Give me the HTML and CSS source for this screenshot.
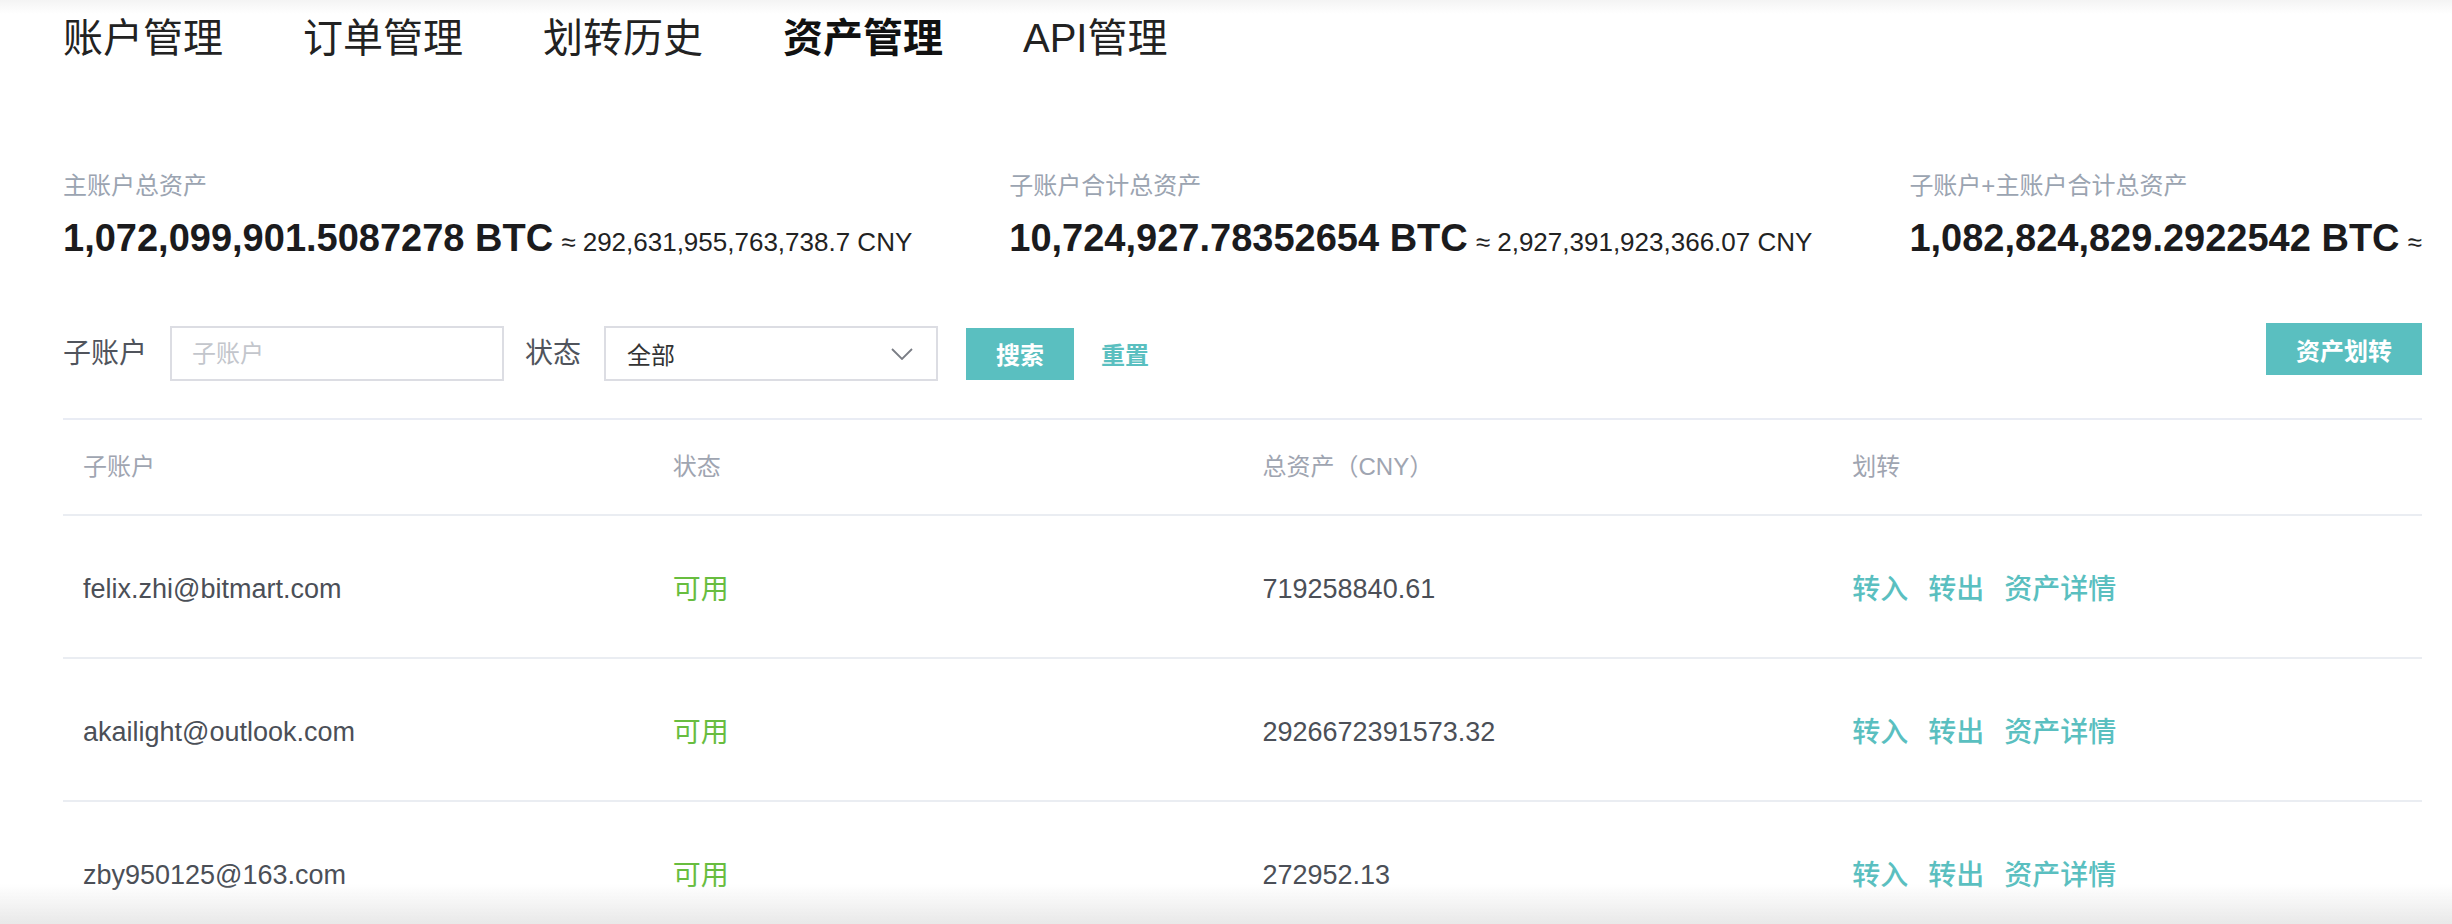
FILE: index.html
```html
<!DOCTYPE html>
<html lang="zh-CN">
<head>
<meta charset="utf-8">
<title>资产管理</title>
<link rel="stylesheet" href="styles.css">
</head>
<body>
<div class="page">
  <nav class="tabs">
    <a class="tab">账户管理</a>
    <a class="tab">订单管理</a>
    <a class="tab">划转历史</a>
    <a class="tab active">资产管理</a>
    <a class="tab">API管理</a>
  </nav>

  <section class="summary">
    <div class="sum-item">
      <div class="sum-label">主账户总资产</div>
      <div class="sum-value"><span class="btc">1,072,099,901.5087278 BTC</span><span class="cny">≈ 292,631,955,763,738.7 CNY</span></div>
    </div>
    <div class="sum-item">
      <div class="sum-label">子账户合计总资产</div>
      <div class="sum-value"><span class="btc">10,724,927.78352654 BTC</span><span class="cny">≈ 2,927,391,923,366.07 CNY</span></div>
    </div>
    <div class="sum-item">
      <div class="sum-label">子账户+主账户合计总资产</div>
      <div class="sum-value"><span class="btc">1,082,824,829.2922542 BTC</span><span class="cny">≈ 2,928,464,022,267.58 CNY</span></div>
    </div>
  </section>

  <form class="filters">
    <label class="f-label">子账户</label>
    <input class="f-input" type="text" placeholder="子账户">
    <label class="f-label f-label-2">状态</label>
    <div class="f-select">
      <span>全部</span>
      <svg class="chev" width="22" height="12" viewBox="0 0 22 12"><path d="M1 1 L11 11 L21 1" fill="none" stroke="#7a7d85" stroke-width="1.8"/></svg>
    </div>
    <button type="button" class="btn btn-search">搜索</button>
    <a class="reset">重置</a>
    <button type="button" class="btn btn-transfer">资产划转</button>
  </form>

  <div class="table">
    <div class="row head">
      <div class="cell">子账户</div>
      <div class="cell">状态</div>
      <div class="cell">总资产（CNY）</div>
      <div class="cell">划转</div>
    </div>
    <div class="row">
      <div class="cell latin">felix.zhi@bitmart.com</div>
      <div class="cell ok">可用</div>
      <div class="cell latin">719258840.61</div>
      <div class="cell actions"><a>转入</a><a>转出</a><a>资产详情</a></div>
    </div>
    <div class="row">
      <div class="cell latin">akailight@outlook.com</div>
      <div class="cell ok">可用</div>
      <div class="cell latin">2926672391573.32</div>
      <div class="cell actions"><a>转入</a><a>转出</a><a>资产详情</a></div>
    </div>
    <div class="row">
      <div class="cell latin">zby950125@163.com</div>
      <div class="cell ok">可用</div>
      <div class="cell latin">272952.13</div>
      <div class="cell actions"><a>转入</a><a>转出</a><a>资产详情</a></div>
    </div>
  </div>
</div>
<div class="bottom-shade"></div>
</body>
</html>
```

FILE: styles.css
```css
html, body {
  margin: 0;
  height: 100%;
  overflow: hidden;
}
body {
  background: #fff linear-gradient(#f4f4f4, #ffffff 14px) no-repeat;
  font-family: "Liberation Sans", "Noto Sans CJK SC", sans-serif;
  color: #222;
}
.page {
  padding: 18px 30px 0 63px;
}
.tabs {
  display: flex;
  gap: 80px;
}
.tab {
  font-size: 40px;
  line-height: 40px;
  color: #222;
  cursor: pointer;
}
.tab.active {
  font-weight: 700;
  color: #111;
}
.summary {
  margin-top: 110px;
  display: flex;
  gap: 97px;
  white-space: nowrap;
  overflow: hidden;
}
.sum-label {
  font-size: 24px;
  line-height: 36px;
  color: #9ba4b1;
}
.sum-value {
  margin-top: 12px;
  line-height: 44px;
  height: 44px;
}
.btc {
  font-size: 38px;
  font-weight: 700;
  color: #1b1b1d;
}
.cny {
  font-size: 26px;
  color: #222;
  margin-left: 8px;
}
.filters {
  margin: 66px 0 0;
  display: flex;
  align-items: center;
  height: 55px;
}
.f-label {
  font-size: 28px;
  line-height: 28px;
  color: #50545c;
  margin-right: 23px;
}
.f-label-2 {
  margin-left: 21px;
}
.f-input {
  box-sizing: border-box;
  width: 334px;
  height: 55px;
  border: 2px solid #dcdde3;
  padding: 0 20px;
  font-size: 24px;
  font-family: inherit;
  outline: none;
  margin: 0;
}
.f-input::placeholder {
  color: #c3c6cc;
}
.f-select {
  box-sizing: border-box;
  width: 334px;
  height: 55px;
  border: 2px solid #dcdde3;
  padding: 0 23px 0 21px;
  display: flex;
  align-items: center;
  justify-content: space-between;
  font-size: 24px;
  color: #333;
}
.chev {
  display: block;
}
.btn {
  border: 0;
  margin: 0;
  padding: 0;
  background: #5abfc0;
  color: #fff;
  font-family: inherit;
  font-size: 24px;
  font-weight: 700;
  height: 52px;
  cursor: pointer;
}
.btn-search {
  width: 108px;
  margin-left: 28px;
}
.reset {
  margin-left: 27px;
  font-size: 24px;
  font-weight: 700;
  color: #5abfc0;
  cursor: pointer;
}
.btn-transfer {
  width: 156px;
  margin-left: auto;
  align-self: flex-start;
  margin-top: -3px;
}
.table {
  margin-top: 37px;
  border-top: 2px solid #e9ecf4;
}
.row {
  display: grid;
  grid-template-columns: repeat(4, 1fr);
  align-items: center;
  height: 141px;
  border-bottom: 2px solid #eaedf2;
}
.row.head {
  height: 94px;
}
.cell {
  padding-left: 20px;
  font-size: 27px;
  line-height: 40px;
  color: #4b4f57;
  white-space: nowrap;
}
.cell.latin {
  padding-top: 4px;
}
.head .cell {
  font-size: 24px;
  color: #9fa5b1;
}
.cell.ok {
  font-size: 28px;
  color: #68bd3f;
  padding-top: 6px;
}
.actions {
  display: flex;
  gap: 20px;
  padding-top: 6px;
}
.actions a {
  font-size: 28px;
  font-weight: 500;
  color: #5abfc0;
  cursor: pointer;
}
.bottom-shade {
  position: fixed;
  left: 0;
  right: 0;
  bottom: 0;
  height: 40px;
  background: linear-gradient(rgba(235,235,235,0), rgba(230,230,230,0.9));
  pointer-events: none;
}
```
